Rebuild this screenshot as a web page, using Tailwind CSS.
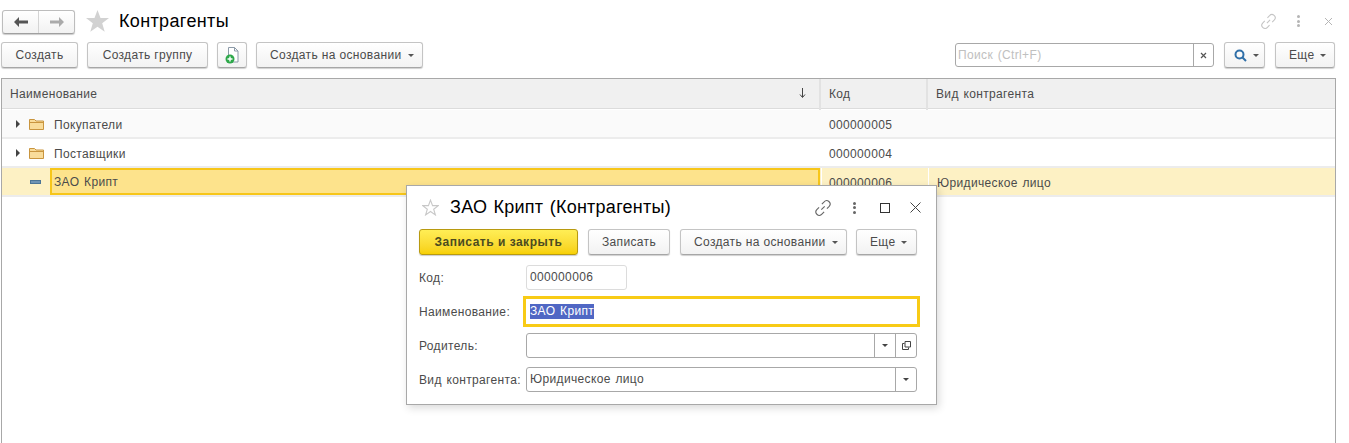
<!DOCTYPE html>
<html lang="ru">
<head>
    <meta charset="UTF-8">
    <title>Контрагенты</title>
    <script src="https://cdn.jsdelivr.net/npm/@tailwindcss/browser@4"></script>
</head>
<body class="bg-white h-[443px] overflow-hidden relative font-['Liberation_Sans',Arial,sans-serif] text-[12px] tracking-[0.35px] [word-spacing:1px] text-[#4b4b4b]">
    <!-- title bar -->
    <header class="flex items-center h-[42px] pl-[2px] pr-[16px]">
        <div class="flex w-[73px] h-[24px] mt-[1px] border border-[#bdbdbd] border-b-[#a0a0a0] rounded-[3px] shadow-[0_1px_1px_#ccc] bg-gradient-to-b from-white to-[#f2f2f2]">
            <div class="w-[36px] flex items-center justify-center border-r border-[#d4d4d4]">
                <svg width="14" height="10" viewBox="0 0 14 10"><path d="M0 5l5-5v3.500h9v3H5V10z" fill="#555"/></svg>
            </div>
            <div class="flex-1 flex items-center justify-center">
                <svg width="14" height="10" viewBox="0 0 14 10"><path d="M14 5 9 0v3.500H0v3h9V10z" fill="#aaa"/></svg>
            </div>
        </div>
        <svg class="ml-[11px]" width="23" height="22" viewBox="0 0 23 22"><path d="M11.500 0l3 8h8.500l-6.800 5.200 2.500 8.500-7.200-5-7.200 5 2.500-8.500L0 8h8.500z" fill="#d2d2d2"/></svg>
        <h1 class="ml-[10px] text-[18px] tracking-[0.36px] text-black leading-none">Контрагенты</h1>
        <div class="ml-auto flex items-center">
            <svg width="17" height="17" viewBox="0 0 16 16" fill="none" stroke="#c4c4c4" stroke-width="1"><path d="M6.500 9.500l3-3M7 4.500l2-2a2.800 2.800 0 0 1 4.500 4l-2 2M9 11.500l-2 2a2.800 2.800 0 0 1-4.500-4l2-2"/></svg>
            <div class="ml-[20px] flex flex-col gap-[1.500px]">
                <span class="w-[3px] h-[3px] rounded-full bg-[#b5b5b5]"></span>
                <span class="w-[3px] h-[3px] rounded-full bg-[#b5b5b5]"></span>
                <span class="w-[3px] h-[3px] rounded-full bg-[#b5b5b5]"></span>
            </div>
            <svg class="ml-[24px]" width="9" height="9" viewBox="0 0 9 9" stroke="#b5b5b5" stroke-width="1"><path d="M1 1l7 7M8 1 1 8"/></svg>
        </div>
    </header>

    <!-- command bar -->
    <div class="flex items-center h-[26px] pl-[1px] pr-[14px]">
        <button class="w-[77px] h-[26px] border border-[#c4c4c4] border-b-[#a6a6a6] rounded-[3px] shadow-[0_1px_1px_#d0d0d0] bg-gradient-to-b from-white to-[#f2f2f2]">Создать</button>
        <button class="ml-[9px] w-[121px] h-[26px] border border-[#c4c4c4] border-b-[#a6a6a6] rounded-[3px] shadow-[0_1px_1px_#d0d0d0] bg-gradient-to-b from-white to-[#f2f2f2]">Создать группу</button>
        <button class="ml-[9px] w-[30px] h-[26px] flex items-center justify-center border border-[#c4c4c4] border-b-[#a6a6a6] rounded-[3px] shadow-[0_1px_1px_#d0d0d0] bg-gradient-to-b from-white to-[#f2f2f2]">
            <svg width="14" height="17" viewBox="0 0 14 17"><path d="M3.500.500h6l3.500 3.500v11h-9.500z" fill="#fff" stroke="#8c9aa8"/><path d="M9.500.500v3.500h3.500" fill="none" stroke="#8c9aa8"/><circle cx="5" cy="12" r="4.500" fill="#2da84a"/><path d="M5 9.500v5M2.500 12h5" stroke="#fff" stroke-width="1.400"/></svg>
        </button>
        <button class="ml-[9px] w-[167px] h-[26px] flex items-center pl-[13px] border border-[#c4c4c4] border-b-[#a6a6a6] rounded-[3px] shadow-[0_1px_1px_#d0d0d0] bg-gradient-to-b from-white to-[#f2f2f2]">
            Создать на основании
            <span class="ml-[6px] w-0 h-0 border-x-[3px] border-x-transparent border-t-[3px] border-t-[#555]"></span>
        </button>
        <div class="ml-auto flex w-[259px] h-[24px] border border-[#a8a8a8] rounded-[3px]">
            <span class="flex-1 pl-[2px] leading-[22px] text-[#c0c0c0]">Поиск (Ctrl+F)</span>
            <span class="w-[20px] flex items-center justify-center border-l border-[#a8a8a8]">
                <svg width="7" height="7" viewBox="0 0 7 7" stroke="#555" stroke-width="1.200"><path d="M1 1l5 5M6 1 1 6"/></svg>
            </span>
        </div>
        <button class="ml-[10px] w-[41px] h-[26px] flex items-center pl-[9px] border border-[#c4c4c4] border-b-[#a6a6a6] rounded-[3px] shadow-[0_1px_1px_#d0d0d0] bg-gradient-to-b from-white to-[#f2f2f2]">
            <svg width="13" height="13" viewBox="0 0 13 13" fill="none" stroke="#2f6fa8" stroke-width="2"><circle cx="5.500" cy="5.500" r="4"/><path d="M8.500 8.500l3.500 3.500"/></svg>
            <span class="ml-[6px] w-0 h-0 border-x-[3px] border-x-transparent border-t-[3px] border-t-[#555]"></span>
        </button>
        <button class="ml-[10px] w-[60px] h-[26px] flex items-center pl-[13px] border border-[#c4c4c4] border-b-[#a6a6a6] rounded-[3px] shadow-[0_1px_1px_#d0d0d0] bg-gradient-to-b from-white to-[#f2f2f2]">
            Еще
            <span class="ml-[6px] w-0 h-0 border-x-[3px] border-x-transparent border-t-[3px] border-t-[#555]"></span>
        </button>
    </div>

    <!-- list -->
    <section class="ml-[1px] mt-[10px] w-[1335px] h-[365px] border-x border-t border-[#a8a8a8]">
        <div class="grid grid-cols-[819px_107px_1fr] h-[30px] bg-[#f0f0f0] border-b border-[#dcdcdc] leading-[31px]">
            <div class="flex justify-between pl-[8px] pr-[13px] border-r-2 border-[#e2e2e2]">
                <span>Наименование</span>
                <svg class="mt-[9px]" width="7" height="10" viewBox="0 0 7 10" fill="none" stroke="#444"><path d="M3.500 0v9M1 6.500l2.500 3 2.500-3"/></svg>
            </div>
            <div class="pl-[8px] border-r-2 border-[#e2e2e2]">Код</div>
            <div class="pl-[8px]">Вид контрагента</div>
        </div>
        <div class="grid grid-cols-[819px_107px_1fr] h-[29px] mt-[1px] bg-[#fafafa] border-b-2 border-[#ececec] leading-[27px]">
            <div class="flex items-center h-[27px] pl-[14px]">
                <span class="w-0 h-0 border-y-[4px] border-y-transparent border-l-[4px] border-l-[#444]"></span>
                <svg class="ml-[9px]" width="15" height="12" viewBox="0 0 15 12"><path d="M.500 11.500v-10h5l1.500 1.500h7.500v8.500z" fill="#f9dc9a" stroke="#c9953f"/><path d="M.500 4.500h14" stroke="#c9953f"/></svg>
                <span class="ml-[10px] pt-[4px]">Покупатели</span>
            </div>
            <div class="pl-[8px] pt-[2px]">000000005</div>
            <div></div>
        </div>
        <div class="grid grid-cols-[819px_107px_1fr] h-[29px] bg-white border-b-2 border-[#ececec] leading-[27px]">
            <div class="flex items-center h-[27px] pl-[14px]">
                <span class="w-0 h-0 border-y-[4px] border-y-transparent border-l-[4px] border-l-[#444]"></span>
                <svg class="ml-[9px]" width="15" height="12" viewBox="0 0 15 12"><path d="M.500 11.500v-10h5l1.500 1.500h7.500v8.500z" fill="#f9dc9a" stroke="#c9953f"/><path d="M.500 4.500h14" stroke="#c9953f"/></svg>
                <span class="ml-[10px] pt-[4px]">Поставщики</span>
            </div>
            <div class="pl-[8px] pt-[2px]">000000004</div>
            <div></div>
        </div>
        <div class="grid grid-cols-[819px_107px_1fr] h-[29px] bg-[#fdf1c4] border-b-2 border-[#ececec] leading-[27px]">
            <div class="flex items-center h-[27px] pl-[28px]">
                <span class="w-[11px] h-[4px] bg-[#6f94b4] border border-[#4c7596]"></span>
                <div class="ml-[9px] mr-[1px] flex-1 h-[27px] pl-[2px] bg-[#fde38c] border-2 border-[#f7c619] leading-[25px]">ЗАО Крипт</div>
            </div>
            <div class="pl-[7px] pt-[2px] border-l border-white">000000006</div>
            <div class="pl-[8px] pt-[2px] border-l border-white">Юридическое лицо</div>
        </div>
    </section>

    <!-- dialog over the list -->
    <div class="absolute left-[406px] top-[185px] w-[531px] h-[220px] bg-white border border-[#a8a8a8] shadow-[2px_3px_8px_rgba(0,0,0,0.15)] px-[12px]">
        <div class="flex items-center h-[43px]">
            <svg class="ml-[3px]" width="17" height="17" viewBox="0 0 23 22"><path d="M11.500 1l2.800 7.500h7.700l-6.200 4.800 2.300 7.700-6.600-4.600-6.600 4.600 2.300-7.700L1 8.500h7.700z" fill="#fff" stroke="#c8c8c8" stroke-width="1.500"/></svg>
            <span class="ml-[11px] text-[18px] tracking-[0.26px] text-black">ЗАО Крипт (Контрагенты)</span>
            <svg class="ml-auto" width="18" height="18" viewBox="0 0 16 16" fill="none" stroke="#666"><path d="M6.500 9.500l3-3M7 4.500l2-2a2.800 2.800 0 0 1 4.500 4l-2 2M9 11.500l-2 2a2.800 2.800 0 0 1-4.500-4l2-2"/></svg>
            <div class="ml-[21px] flex flex-col gap-[1.500px]">
                <span class="w-[3px] h-[3px] rounded-full bg-[#666]"></span>
                <span class="w-[3px] h-[3px] rounded-full bg-[#666]"></span>
                <span class="w-[3px] h-[3px] rounded-full bg-[#666]"></span>
            </div>
            <span class="ml-[24px] w-[10px] h-[10px] border border-[#333]"></span>
            <svg class="ml-[20px] mr-[3px]" width="11" height="11" viewBox="0 0 11 11" stroke="#444"><path d="M.500.500l10 10M10.500.500l-10 10"/></svg>
        </div>
        <div class="flex h-[26px]">
            <button class="w-[159px] border border-[#b89a10] rounded-[3px] shadow-[0_1px_1px_#ccc] bg-gradient-to-b from-[#ffee55] to-[#f7d000] font-bold tracking-[0.5px] text-[#4b4b20]">Записать и закрыть</button>
            <button class="ml-[10px] w-[82px] border border-[#c4c4c4] border-b-[#a6a6a6] rounded-[3px] shadow-[0_1px_1px_#d0d0d0] bg-gradient-to-b from-white to-[#f2f2f2]">Записать</button>
            <button class="ml-[10px] w-[167px] flex items-center pl-[13px] border border-[#c4c4c4] border-b-[#a6a6a6] rounded-[3px] shadow-[0_1px_1px_#d0d0d0] bg-gradient-to-b from-white to-[#f2f2f2]">
                Создать на основании
                <span class="ml-[6px] w-0 h-0 border-x-[3px] border-x-transparent border-t-[3px] border-t-[#555]"></span>
            </button>
            <button class="ml-[9px] w-[61px] flex items-center pl-[13px] border border-[#c4c4c4] border-b-[#a6a6a6] rounded-[3px] shadow-[0_1px_1px_#d0d0d0] bg-gradient-to-b from-white to-[#f2f2f2]">
                Еще
                <span class="ml-[6px] w-0 h-0 border-x-[3px] border-x-transparent border-t-[3px] border-t-[#555]"></span>
            </button>
        </div>
        <div class="flex items-center h-[25px] mt-[10px]">
            <span class="w-[107px]">Код:</span>
            <div class="w-[101px] h-[25px] pl-[3px] border border-[#dcdcdc] rounded-[3px] leading-[23px]">000000006</div>
        </div>
        <div class="flex items-center h-[31px] mt-[6px]">
            <span class="w-[104px]">Наименование:</span>
            <div class="w-[397px] h-[31px] pl-[4px] border-[3px] border-[#f8cb16] leading-[25px]"><span class="inline-block bg-[#5067c4] text-white leading-[15px]">ЗАО Крипт</span></div>
        </div>
        <div class="flex items-center h-[25px] mt-[6px]">
            <span class="w-[107px]">Родитель:</span>
            <div class="flex w-[391px] h-[25px] border border-[#a8a8a8] rounded-[3px]">
                <div class="flex-1"></div>
                <div class="w-[21px] flex items-center justify-center border-l border-[#a8a8a8]"><span class="w-0 h-0 border-x-[3px] border-x-transparent border-t-[3px] border-t-[#444]"></span></div>
                <div class="w-[21px] flex items-center justify-center border-l border-[#a8a8a8]">
                    <svg width="9" height="9" viewBox="0 0 9 9" fill="none" stroke="#444"><path d="M2.500 2.500H.500v6h6v-2"/><path d="M3 .500h5.500v5.500H3z"/></svg>
                </div>
            </div>
        </div>
        <div class="flex items-center h-[25px] mt-[9px]">
            <span class="w-[107px] whitespace-nowrap">Вид контрагента:</span>
            <div class="flex w-[391px] h-[25px] border border-[#a8a8a8] rounded-[3px]">
                <div class="flex-1 pl-[3px] leading-[23px]">Юридическое лицо</div>
                <div class="w-[21px] flex items-center justify-center border-l border-[#a8a8a8]"><span class="w-0 h-0 border-x-[3px] border-x-transparent border-t-[3px] border-t-[#444]"></span></div>
            </div>
        </div>
    </div>
</body>
</html>
